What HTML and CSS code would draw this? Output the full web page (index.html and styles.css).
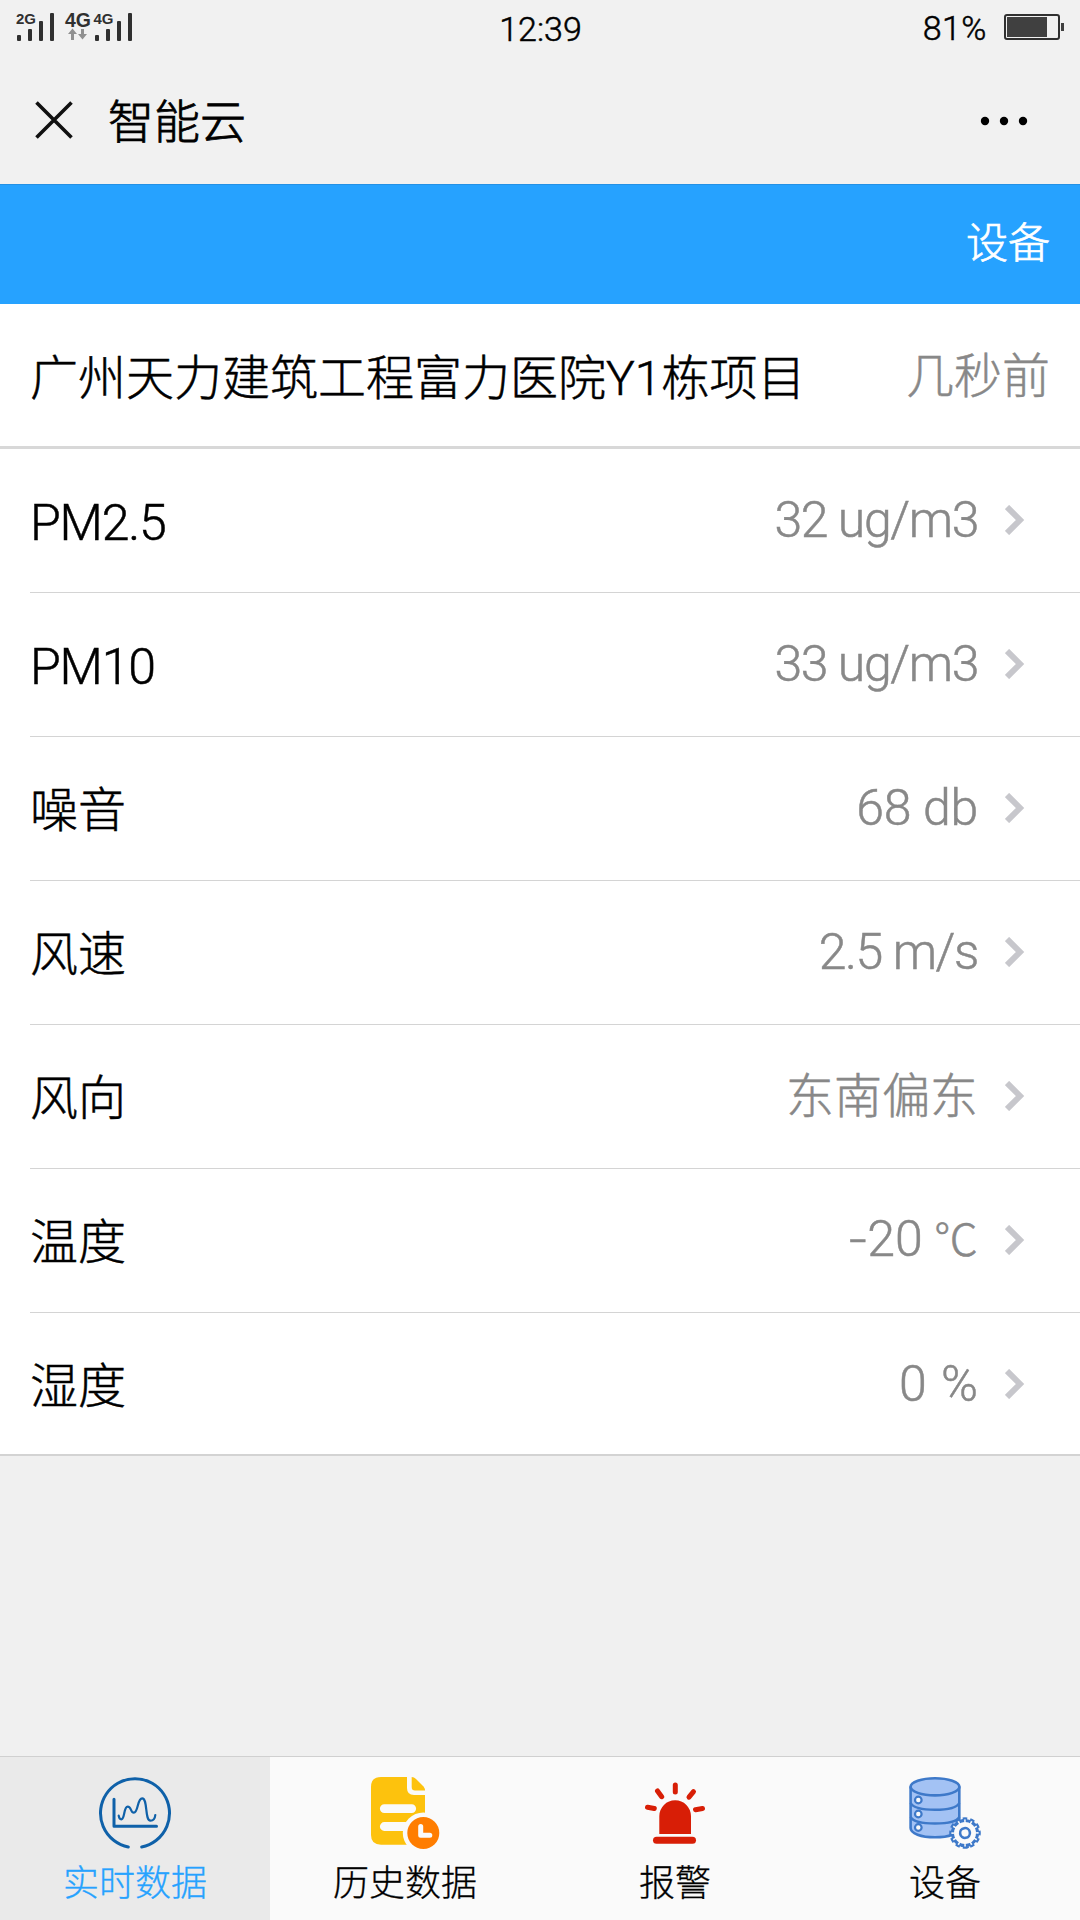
FILE: index.html
```
<!DOCTYPE html>
<html lang="zh-CN">
<head>
<meta charset="utf-8">
<title>智能云</title>
<link rel="stylesheet" href="styles.css">
</head>
<body>
<div class="screen">
  <header class="status">
    <svg class="signals" width="120" height="32" viewBox="0 0 120 32">
      <g fill="#303030">
        <text class="net" x="0" y="14" font-size="15.5" textLength="20" lengthAdjust="spacingAndGlyphs">2G</text>
        <rect x="1" y="25" width="4" height="6" rx="1"/><rect x="12" y="19" width="4" height="12" rx="1"/><rect x="23" y="11" width="4" height="20" rx="1"/><rect x="34" y="3" width="4" height="28" rx="1"/>
        <text class="net" x="49" y="17" font-size="19.5" textLength="26" lengthAdjust="spacingAndGlyphs">4G</text>
        <text class="net" x="77.500" y="14" font-size="15.5" textLength="20" lengthAdjust="spacingAndGlyphs">4G</text>
        <rect x="79" y="25" width="4" height="6" rx="1"/><rect x="90" y="19" width="4" height="12" rx="1"/><rect x="101" y="11" width="4" height="20" rx="1"/><rect x="112" y="3" width="4" height="28" rx="1"/>
      </g>
      <path fill="#909090" d="M52 24l4.500-5.500 4.500 5.500h-3v6h-3v-6zM62 24l4.500 5.500 4.500-5.500h-3v-5h-3v5z"/>
    </svg>
    <span class="clock">12:39</span>
    <div class="power">
      <span class="percent">81%</span>
      <svg width="62" height="28" viewBox="0 0 62 28"><rect x="2" y="2" width="54" height="24" rx="2" fill="none" stroke="#303030" stroke-width="2"/><path fill="#404040" d="M4 4h40v20H4zM58 10h3v8h-3z"/></svg>
    </div>
  </header>
  <div class="titlebar">
    <svg class="close" width="38" height="38" viewBox="0 0 38 38"><path d="M1.500 1.500l35 35M36.500 1.500L1.500 36.500" stroke="#111" stroke-width="3.600" fill="none"/></svg>
    <h1 class="title">智能云</h1>
    <svg class="more" width="48" height="10" viewBox="0 0 48 10"><circle cx="5" cy="5" r="4.200"/><circle cx="24" cy="5" r="4.200"/><circle cx="43" cy="5" r="4.200"/></svg>
  </div>
  <nav class="topnav"><span>设备</span></nav>
  <main class="list">
    <div class="project"><span class="label">广州天力建筑工程富力医院Y1栋项目</span><span class="ago">几秒前</span></div>
    <div class="row"><span class="label latin">PM2.5</span><span class="value latin tight">32 ug/m3</span><svg class="chev" viewBox="0 0 20 30"><path d="M2 2l13 13L2 28"/></svg></div>
    <div class="row"><span class="label latin">PM10</span><span class="value latin tight">33 ug/m3</span><svg class="chev" viewBox="0 0 20 30"><path d="M2 2l13 13L2 28"/></svg></div>
    <div class="row"><span class="label">噪音</span><span class="value latin noise">68 db</span><svg class="chev" viewBox="0 0 20 30"><path d="M2 2l13 13L2 28"/></svg></div>
    <div class="row"><span class="label">风速</span><span class="value latin tight">2.5 m/s</span><svg class="chev" viewBox="0 0 20 30"><path d="M2 2l13 13L2 28"/></svg></div>
    <div class="row"><span class="label">风向</span><span class="value">东南偏东</span><svg class="chev" viewBox="0 0 20 30"><path d="M2 2l13 13L2 28"/></svg></div>
    <div class="row"><span class="label">温度</span><span class="value latin temp"><span class="minus">-</span>20 <span class="unit">℃</span></span><svg class="chev" viewBox="0 0 20 30"><path d="M2 2l13 13L2 28"/></svg></div>
    <div class="row"><span class="label">湿度</span><span class="value latin humidity">0 %</span><svg class="chev" viewBox="0 0 20 30"><path d="M2 2l13 13L2 28"/></svg></div>
  </main>
  <footer class="tabs">
    <div class="tab active">
      <svg class="icon" viewBox="0 0 72 72" fill="none" stroke="#0f61a9" stroke-width="3" stroke-linecap="round" stroke-linejoin="round">
        <path d="M29.300 70A34.500 34.500 0 1 1 42.700 70"/><path d="M15 22.300V49.300H57.500"/>
        <path stroke-width="2.200" d="M19.700 38.700C20 41 21 42.300 22.300 42.300C26 42.300 24.500 29.700 28.700 29.700C32.500 29.700 31.500 35.700 34.800 35.700C39.500 35.700 38 21.300 43.200 21.300C49 21.300 45.500 43.700 51.500 43.700C54.500 43.700 56 41 56.300 38"/>
      </svg>
      <span>实时数据</span>
    </div>
    <div class="tab">
      <svg class="icon" viewBox="0 0 72 72">
        <path fill="#fdc20d" d="M12 0H38V11Q38 18 45 18H56V67.700H12Q2 67.700 2 58V10Q2 0 12 0Z"/><path fill="#fdc20d" d="M42.700 0Q45 0 47 2L54.500 9.500Q56 11.500 56 13.500H46Q42.700 13.500 42.700 10Z"/>
        <path d="M15.300 31.600H42.700M15.300 49.500H36" stroke="#fafafa" stroke-width="8.800" stroke-linecap="round"/>
        <circle cx="54.300" cy="56" r="20.500" fill="#fafafa"/><circle cx="54.300" cy="56" r="16" fill="#ff7d00"/>
        <path d="M51.700 49.500V58.200H60.800" fill="none" stroke="#fafafa" stroke-width="5" stroke-linecap="round" stroke-linejoin="round"/>
      </svg>
      <span>历史数据</span>
    </div>
    <div class="tab">
      <svg class="icon" viewBox="0 0 72 72" fill="#d81e06">
        <path d="M20.300 57V39.200a15.850 15.850 0 0 1 31.700 0V57Z"/><rect x="14" y="59.700" width="43" height="7" rx="3.500"/>
        <path stroke="#d81e06" stroke-width="5" stroke-linecap="round" d="M36.300 8V15M18.500 14L22.700 19.700M54.500 14.700L50 20.200M8.500 30.200L15.300 31.500M63.500 31.500L56.500 32.700"/>
      </svg>
      <span>报警</span>
    </div>
    <div class="tab">
      <svg class="icon" viewBox="0 0 72 72" fill="none" stroke="#3e79c9" stroke-width="2.600">
        <path fill="#a3c2f4" d="M1.600 9.500V51C1.600 56.500 12 60.300 26 60.300S50.300 56.500 50.300 51V9.500"/><ellipse fill="#a3c2f4" cx="26" cy="9.800" rx="24.400" ry="8.600"/>
        <path d="M1.600 26C4 30.500 14 32.800 26 32.800S48 30.500 50.300 26M1.600 40C4 44.500 14 46.500 26 46.500S48 44.500 50.300 40"/>
        <g fill="#fafafa" stroke-width="2.200"><circle cx="9.300" cy="23" r="3.300"/><circle cx="9.300" cy="37" r="3.300"/><circle cx="9.300" cy="50.500" r="3.300"/></g>
        <g transform="rotate(-9 56 56)">
          <circle cx="56" cy="56" r="12.800" fill="#3e79c9"/><circle cx="56" cy="56" r="13.800" stroke-width="4" pathLength="12" stroke-dasharray=".6 .4"/>
          <circle cx="56" cy="56" r="11" fill="#fafafa" stroke="none"/><circle cx="56" cy="56" r="12" stroke="#fafafa" stroke-width="3.200" pathLength="12" stroke-dasharray=".24 .76" stroke-dashoffset="-.18"/>
          <circle cx="56" cy="56" r="4.900"/>
        </g>
      </svg>
      <span>设备</span>
    </div>
  </footer>
</div>
</body>
</html>
```
FILE: styles.css
```
* { box-sizing: border-box; }
body { margin: 0; font-family: Roboto, "Noto Sans CJK SC", sans-serif; font-weight: 300; color: #000; -webkit-text-stroke: 0.5px currentColor; }
.screen { width: 1080px; height: 1920px; display: flex; flex-direction: column; background: #f0f0f0; overflow: hidden; white-space: nowrap; }
.status { height: 56px; display: grid; grid-template-columns: 1fr auto 1fr; padding: 0 15px 0 16px; background: #f1f1f1; }
.signals { margin-top: 10px; -webkit-text-stroke: 0; }
.net { font-family: "Liberation Sans", sans-serif; font-weight: 700; }
.clock { font-size: 34px; line-height: 40px; padding-top: 9px; }
.power { display: flex; justify-content: flex-end; gap: 16px; padding-top: 8px; font-size: 34px; line-height: 40px; }
.percent { letter-spacing: 0.5px; }
.power svg { margin-top: 5px; }
.titlebar { height: 128px; display: flex; align-items: center; padding: 0 52px 0 35px; background: #f1f1f1; }
.close { margin-top: -1px; }
.title { flex: 1; margin: 3px 0 0 35px; font-size: 46px; line-height: 60px; font-weight: 300; -webkit-text-stroke-width: 0.8px; }
.more { margin-top: 1px; }
.topnav { height: 120px; padding: 0 30px 2px; display: flex; justify-content: flex-end; align-items: center; background: #26a2ff; border-top: 1px solid #2491e5; color: #fff; -webkit-text-stroke: 0.7px #fff; font-size: 42px; line-height: 56px; }
.list { background: #fff; border-bottom: 2px solid #d3d3d3; line-height: 56px; }
.project { height: 145px; display: flex; justify-content: space-between; align-items: center; padding: 3px 30px 0; border-bottom: 3px solid #d8d8d8; font-size: 48px; }
.row { height: 144px; display: flex; align-items: center; padding-right: 55px; margin-left: 30px; border-bottom: 1px solid #d4d4d4; font-size: 48px; }
.row:last-child { border-bottom: 0; height: 143px; margin-bottom: -2px; }
.label { flex: 1; padding-top: 5px; }
.value, .ago { color: #888; -webkit-text-stroke-color: #888; }
.latin { font-size: 50px; letter-spacing: -1.200px; }
.value.latin { padding-bottom: 1px; }
.tight { letter-spacing: -1.400px; }
.noise { letter-spacing: -0.300px; }
.temp { letter-spacing: 0; }
.minus { display: inline-block; transform: scaleX(1.250); transform-origin: left; letter-spacing: 4px; }
.humidity { letter-spacing: 1px; margin-right: -1px; }
.unit { font-size: 44px; margin-left: -1px; }
.chev { width: 20px; height: 30px; margin: -2px 0 0 27px; fill: none; stroke: #c7c7cc; stroke-width: 6; }
.tabs { margin-top: auto; height: 164px; display: grid; grid-template-columns: repeat(4, 1fr); background: #fafafa; border-top: 1px solid #d0d0d0; -webkit-text-stroke-width: 0.3px; }
.tab { display: flex; flex-direction: column; align-items: center; padding-top: 20px; font-size: 36px; line-height: 48px; gap: 11px; }
.tab.active { background: #eaeaea; color: #26a2ff; -webkit-text-stroke-color: #26a2ff; }
.icon { width: 72px; height: 72px; overflow: visible; }
```
